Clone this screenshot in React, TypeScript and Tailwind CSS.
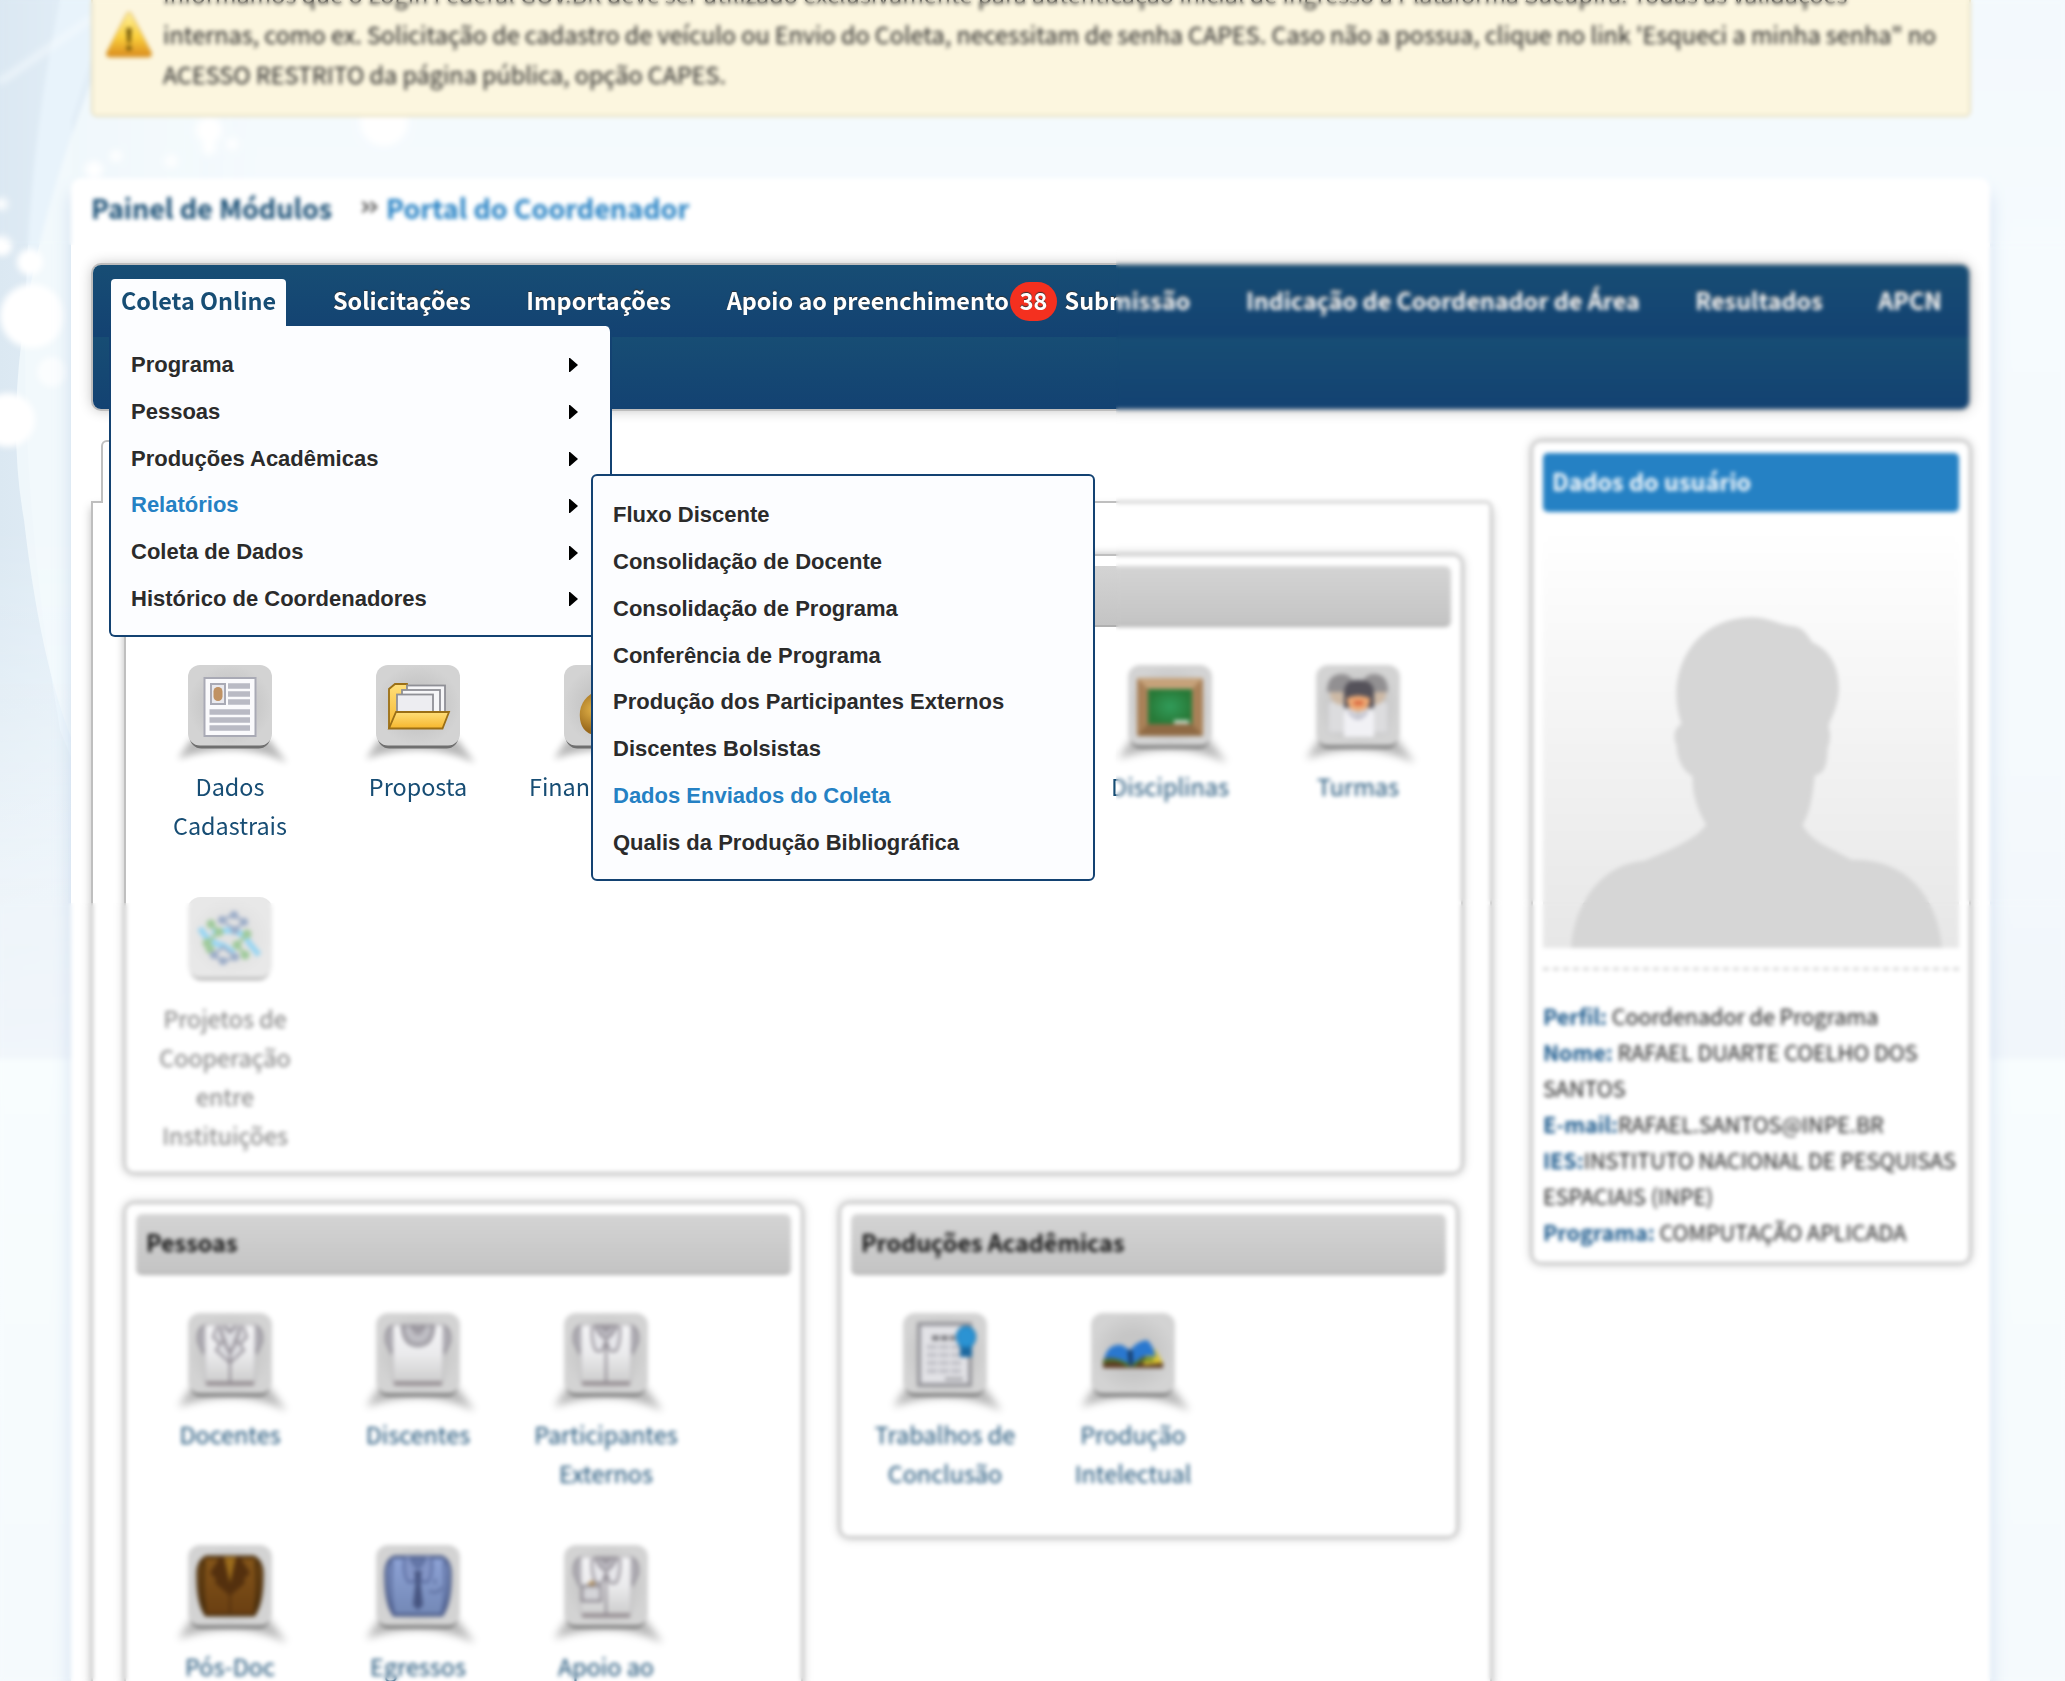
import type { ReactNode } from "react";

const alertLines = [
  "Informamos que o Login Federal GOV.BR deve ser utilizado exclusivamente para autenticação inicial de ingresso à Plataforma Sucupira. Todas as validações",
  "internas, como ex. Solicitação de cadastro de veículo ou Envio do Coleta, necessitam de senha CAPES. Caso não a possua, clique no link 'Esqueci a minha senha\" no",
  "ACESSO RESTRITO da página pública, opção CAPES.",
];

const menuItems = [
  "Programa",
  "Pessoas",
  "Produções Acadêmicas",
  "Relatórios",
  "Coleta de Dados",
  "Histórico de Coordenadores",
];

const submenuItems = [
  "Fluxo Discente",
  "Consolidação de Docente",
  "Consolidação de Programa",
  "Conferência de Programa",
  "Produção dos Participantes Externos",
  "Discentes Bolsistas",
  "Dados Enviados do Coleta",
  "Qualis da Produção Bibliográfica",
];

const userData: [string, string][] = [
  ["Perfil:", " Coordenador de Programa"],
  ["Nome:", " RAFAEL DUARTE COELHO DOS SANTOS"],
  ["E-mail:", "RAFAEL.SANTOS@INPE.BR"],
  ["IES:", "INSTITUTO NACIONAL DE PESQUISAS ESPACIAIS (INPE)"],
  ["Programa:", " COMPUTAÇÃO APLICADA"],
];

function PageBackdrop() {
  return (
    <svg className="absolute inset-0" width="2065" height="1681" viewBox="0 0 2065 1681">
      <defs>
        <linearGradient id="sky" x1="0" y1="0" x2="0" y2="1">
          <stop offset="0" stopColor="#f3f9fd" />
          <stop offset="0.15" stopColor="#f6fbfe" />
          <stop offset="0.45" stopColor="#f5fafd" />
          <stop offset="0.628" stopColor="#f1f6fb" />
          <stop offset="0.632" stopColor="#f8fdfe" />
          <stop offset="1" stopColor="#f5fafd" />
        </linearGradient>
        <linearGradient id="leftSky" x1="0" y1="0" x2="1" y2="0">
          <stop offset="0" stopColor="#dbe8f2" />
          <stop offset="0.4" stopColor="#e4eff8" />
          <stop offset="1" stopColor="#f4fafd" stopOpacity="0" />
        </linearGradient>
        <linearGradient id="fade" x1="0" y1="0" x2="0" y2="1">
          <stop offset="0" stopColor="#fff" />
          <stop offset="0.5" stopColor="#fff" />
          <stop offset="0.85" stopColor="#333" />
          <stop offset="1" stopColor="#000" />
        </linearGradient>
        <mask id="fadeMask">
          <rect width="420" height="1060" fill="url(#fade)" />
        </mask>
        <filter id="soft">
          <feGaussianBlur stdDeviation="3" />
        </filter>
      </defs>
      <rect width="2065" height="1681" fill="url(#sky)" />
      <g mask="url(#fadeMask)">
        <rect width="260" height="1060" fill="url(#leftSky)" />
        <path d="M60 0 Q-10 330 60 730 L72 760 L72 120 Q90 60 110 0Z" fill="#e8f3fb" />
        <path d="M100 60 Q-10 330 24 520 Q40 660 72 740 L200 740 L200 60Z" fill="#f4fafd" opacity="0.8" />
        <path d="M0 82 L92 18" stroke="#f6fbfe" strokeWidth="4" filter="url(#soft)" />
        <g fill="#fff" filter="url(#soft)">
          <circle cx="32" cy="316" r="32" />
          <circle cx="30" cy="262" r="13" />
          <circle cx="52" cy="372" r="15" opacity="0.7" />
          <circle cx="2" cy="246" r="10" />
          <circle cx="2" cy="204" r="6" />
          <circle cx="8" cy="420" r="27" />
          <circle cx="209" cy="130" r="13" />
          <circle cx="209" cy="148" r="7" />
          <circle cx="384" cy="122" r="24" />
          <circle cx="94" cy="170" r="9" />
          <circle cx="171" cy="161" r="6" />
          <circle cx="116" cy="156" r="6" />
          <circle cx="232" cy="144" r="6" />
        </g>
      </g>
    </svg>
  );
}

function WarningIcon() {
  return (
    <svg className="absolute left-[11px] top-[11px]" width="50" height="50" viewBox="0 0 50 50">
      <defs>
        <linearGradient id="warn" x1="0" y1="0" x2="0" y2="1">
          <stop offset="0" stopColor="#fdf0a0" />
          <stop offset="0.55" stopColor="#fbd03c" />
          <stop offset="1" stopColor="#d98a1c" />
        </linearGradient>
      </defs>
      <path d="M25 1 Q27 1 29 6 L47 41 Q49 46 44 46 H6 Q1 46 3 41 L21 6 Q23 1 25 1Z" fill="url(#warn)" stroke="#d9a84a" strokeWidth="1" />
      <path d="M22.5 17 H27.5 L26.5 32 H23.5Z" fill="#6b5208" />
      <circle cx="25" cy="37" r="2.600" fill="#6b5208" />
    </svg>
  );
}

function TileShadow() {
  return (
    <path d="M13 94 Q38 85 66 85 Q96 85 122 98 L104 74 L26 74Z" fill="#000" opacity="0.28" filter="url(#tileBlur)" />
  );
}

function Tile({ children, faded = false }: { children: ReactNode; faded?: boolean }) {
  return (
    <svg className={faded ? "opacity-50" : ""} width="130" height="106" viewBox="0 0 130 106">
      {!faded && <TileShadow />}
      <rect x="24.500" y="10" width="81" height="73.500" rx="12" fill="#6f6f6f" />
      <rect x="23" y="0" width="84" height="80.500" rx="12" fill="url(#tileFace)" />
      <g transform="translate(23 0)">{children}</g>
    </svg>
  );
}

function TileDefs() {
  return (
    <svg className="absolute" width="0" height="0">
      <defs>
        <filter id="tileBlur" x="-20%" y="-20%" width="140%" height="150%">
          <feGaussianBlur stdDeviation="3.500" />
        </filter>
        <radialGradient id="tileFace">
          <stop offset="0.5" stopColor="#c6c6c6" />
          <stop offset="1" stopColor="#d3d3d3" />
        </radialGradient>
        <linearGradient id="shirt" x1="0" y1="0" x2="0" y2="1">
          <stop offset="0" stopColor="#f4f4f6" />
          <stop offset="0.5" stopColor="#ebebed" />
          <stop offset="1" stopColor="#cecece" />
        </linearGradient>
        <linearGradient id="brown" x1="0" y1="0" x2="0" y2="1">
          <stop offset="0" stopColor="#85561a" />
          <stop offset="1" stopColor="#6a3f12" />
        </linearGradient>
        <linearGradient id="blue" x1="0" y1="0" x2="0" y2="1">
          <stop offset="0" stopColor="#8ea3d6" />
          <stop offset="1" stopColor="#7388b6" />
        </linearGradient>
        <linearGradient id="folder" x1="0" y1="0" x2="0" y2="1">
          <stop offset="0" stopColor="#ffdf7a" />
          <stop offset="1" stopColor="#f6b62c" />
        </linearGradient>
        <radialGradient id="bag" cx="0.3" cy="0.4">
          <stop offset="0" stopColor="#e5b54a" />
          <stop offset="1" stopColor="#9a691b" />
        </radialGradient>
        <radialGradient id="board">
          <stop offset="0" stopColor="#319c5a" />
          <stop offset="1" stopColor="#287a38" />
        </radialGradient>
      </defs>
    </svg>
  );
}

function DocIcon() {
  return (
    <g>
      <rect x="16.500" y="13" width="51" height="58" fill="#fafafc" stroke="#a9aab5" strokeWidth="2" />
      <rect x="23" y="19" width="14" height="20" fill="#e9e9ee" stroke="#a9aab5" strokeWidth="2" />
      <rect x="25.500" y="22" width="9" height="14" rx="4.500" fill="#c09263" />
      <path d="M40 21 H62 M40 29 H62 M40 37 H62 M21.500 47 H62 M21.500 55 H62 M21.500 63 H62" stroke="#b9bac4" strokeWidth="5.500" />
    </g>
  );
}

function FolderIcon() {
  return (
    <g strokeWidth="1.800">
      <path d="M13 63 V24 L19 19 H31 L32 25 V63Z" fill="url(#folder)" stroke="#9b6f16" />
      <rect x="31" y="20.500" width="38" height="34" fill="#f6f6f8" stroke="#8f9096" />
      <rect x="26" y="25" width="38" height="32" fill="#f6f6f8" stroke="#8f9096" />
      <rect x="21" y="29.500" width="36" height="30" fill="#ededf1" stroke="#8f9096" />
      <path d="M20 47 H73 L66.500 63.500 H13Z" fill="url(#folder)" stroke="#9b6f16" />
    </g>
  );
}

function MoneyIcon() {
  return (
    <g>
      <path d="M30 27 L27 12 L36 16 L42 11 L50 16 L56 12 L53 27Z" fill="#c98f2b" />
      <path d="M30 27 Q14 36 16 54 Q18 70 36 71 H48 Q66 70 67 54 Q68 36 53 27Z" fill="url(#bag)" />
    </g>
  );
}

function BoardIcon() {
  return (
    <g>
      <rect x="9" y="13" width="66" height="58" rx="2" fill="#a98158" />
      <path d="M9 13 H75 L63 25 H21Z" fill="#c6a27a" />
      <path d="M9 71 H75 L63 58 H21Z" fill="#8f6a44" />
      <rect x="20" y="24" width="44" height="35" fill="url(#board)" />
      <path d="M46 57 H61" stroke="#d5e2d3" strokeWidth="3.500" />
    </g>
  );
}

function ClassIcon() {
  return (
    <g>
      <path d="M12 68 V38 Q27 30 40 44 V68Z M72 68 V38 Q57 30 44 44 V68Z" fill="#dcdcde" stroke="#c5c5c8" />
      <circle cx="26" cy="28" r="12" fill="#cdb9a5" />
      <circle cx="58" cy="28" r="12" fill="#cdb9a5" />
      <path d="M11 27 Q11 9 26 9 Q38 9 40 27Z M44 27 Q46 9 58 9 Q72 9 72 27Z" fill="#929092" />
      <path d="M28 43 V28 Q28 15 42 15 Q58 15 58 28 V43Z" fill="#55525a" />
      <path d="M31 33 Q42 28 54 33 Q54 46 42 46 Q31 46 31 33Z" fill="#eda873" />
      <path d="M38 38 H47" stroke="#d8643c" strokeWidth="4" />
      <path d="M28 72 V48 Q34 42 42 52 Q51 42 58 48 V72Z" fill="#f1f1f5" />
      <path d="M33 46 Q42 60 51 46" fill="none" stroke="#c4c4d0" strokeWidth="4" />
    </g>
  );
}

function NetworkIcon() {
  const green: [number, number][] = [[23, 27], [19, 46], [31, 35], [59, 37], [49, 48], [57, 58], [22, 52]];
  const navy: [number, number][] = [[34, 23], [46, 18], [56, 25], [26, 58], [35, 64], [47, 60], [47, 33]];
  return (
    <g fill="none">
      <path d="M12 31 Q20 46 36 49 L46 56 M24 35 Q54 29 61 46 L71 58" stroke="#3aaee6" strokeWidth="6" />
      <path d="M34 23 L46 18 L56 25 L47 33Z M26 58 L35 50 L47 60 L35 65Z" stroke="#3c5d92" strokeWidth="2.500" />
      <path d="M23 27 L31 35 L19 46 L22 52 M59 37 L49 48 L57 58" stroke="#43963b" strokeWidth="3" />
      {green.map(([x, y]) => <circle key={`${x}-${y}`} cx={x} cy={y} r="4.500" fill="#43963b" />)}
      {navy.map(([x, y]) => <circle key={`${x}-${y}`} cx={x} cy={y} r="4" fill="#3c5d92" />)}
    </g>
  );
}

function Torso({ collar, badge = false }: { collar: "lapel" | "round" | "open"; badge?: boolean }) {
  return (
    <g stroke="#8d8890" strokeWidth="2" fill="none">
      <path d="M18 12 Q8 15 10 29 L15 40 L18 34Z" fill="#adabb2" stroke="#9a979e" />
      <path d="M66 12 Q76 15 74 29 L69 40 L66 34Z" fill="#adabb2" stroke="#9a979e" />
      <rect x="17" y="12" width="50" height="57" fill="url(#shirt)" stroke="#b9b7bb" strokeWidth="1" />
      <path d="M18 70.500 H66" stroke="#938b90" strokeWidth="4" />
      {collar === "round" && (
        <g>
          <path d="M26 13 Q27 33 42 33 Q57 33 58 13Z" fill="#b3b1b8" stroke="#96939a" strokeWidth="2.500" />
          <path d="M32 13 Q33 26 42 26 Q51 26 52 13" stroke="#cfcfd4" />
          <path d="M36 13 L42 19 L48 13" />
        </g>
      )}
      {collar === "open" && (
        <g>
          <path d="M28 13 Q27 30 32 38 L38 38 L42 28 L46 38 L52 38 Q57 30 56 13" fill="#e6e6ea" />
          <path d="M31 13 Q35 22 42 26 Q49 22 53 13Z" fill="#c0bec5" />
          <path d="M37 13 L42 18 L47 13 M42 27 V70" />
        </g>
      )}
      {collar === "lapel" && (
        <g>
          <path d="M29 13 L25 24 L32 31 L28 37 L42 50 L56 37 L52 31 L59 24 L55 13" fill="#dedee2" />
          <path d="M32 13 Q34 26 42 40 Q50 26 52 13 M36 13 L42 19 L48 13" strokeWidth="2.500" />
          <path d="M33 31 L37 26 M51 31 L47 26 M42 40 V70" />
        </g>
      )}
      {badge && (
        <g>
          <rect x="18" y="41" width="19" height="15" fill="#d4d4d8" strokeWidth="2.500" />
          <path d="M23 40 L28 35 L32 40Z" fill="#b08a52" stroke="none" />
        </g>
      )}
    </g>
  );
}

function BrownSuit() {
  return (
    <g>
      <path d="M18 12 H66 Q75 16 74 32 Q74 58 66 70 H18 Q10 58 10 32 Q9 16 18 12Z" fill="url(#brown)" stroke="#4b2f0d" strokeWidth="3" />
      <path d="M16 16 Q13 44 17 66 M68 16 Q71 44 67 66" stroke="#4b2f0d" strokeWidth="3" fill="none" />
      <path d="M32 12 L22 28 L28 34 L27 38 L42 51 L57 38 L56 34 L62 28 L52 12Z" fill="#54300e" />
      <path d="M36 12 L42 38 L48 12Z" fill="#9c6c1c" />
      <path d="M42 50 V68" stroke="#54300e" strokeWidth="2" />
    </g>
  );
}

function BlueShirt() {
  return (
    <g>
      <path d="M18 12 H66 Q75 16 74 32 Q74 58 66 70 H18 Q10 58 10 32 Q9 16 18 12Z" fill="url(#blue)" stroke="#475886" strokeWidth="3" />
      <path d="M16 16 Q13 44 18 68 M68 16 Q71 44 66 68" stroke="#5a6b9b" strokeWidth="2.500" fill="none" />
      <path d="M29 12 Q26 28 32 37 L38 37 L42 28 L46 37 L52 37 Q58 28 55 12" fill="#8395c6" stroke="#56679a" strokeWidth="2" />
      <path d="M34 13 Q38 22 42 24 Q46 22 50 13Z" fill="#6577a8" stroke="#475886" />
      <path d="M38 26 H46 L44 34 L47 60 L42 65 L37 60 L40 34Z" fill="#465480" />
      <path d="M53 46 Q62 50 66 42 M59 34 V39" fill="none" stroke="#5a6b9b" strokeWidth="2" />
    </g>
  );
}

function CertificateIcon() {
  return (
    <g>
      <rect x="16" y="11" width="51" height="61" fill="#e2e2e6" stroke="#98989d" strokeWidth="4" />
      <path d="M29 25 H52" stroke="#77777c" strokeWidth="5" strokeDasharray="7 2" />
      <path d="M24 34 H60 M24 42 H60 M24 50 H60 M24 58 H60" stroke="#bdbdc4" strokeWidth="4" strokeDasharray="10 2" />
      <path d="M42 66 H60" stroke="#b0b0b5" strokeWidth="4" />
      <path d="M57 32 H69 V44 H57Z" fill="#1c689f" />
      <ellipse cx="63" cy="24" rx="9.500" ry="10.500" fill="#2b93d3" stroke="#1c7ab8" strokeWidth="1.500" />
    </g>
  );
}

function BookIcon() {
  return (
    <g>
      <path d="M12 48 L16 42 H66 L72 50 V55 H12Z" fill="#5c3a22" />
      <path d="M56 38 L64 36 L72 50 L52 52Z" fill="#d9c332" />
      <path d="M13 46 Q17 30 31 32 L39 37 Q46 28 56 27 Q62 32 65 44 Q50 40 42 53 L38 53 Q26 42 13 46Z" fill="#2a78cf" />
      <path d="M39 37 L40 52" stroke="#16375f" strokeWidth="4" />
      <path d="M12 49 Q26 44 38 53 M42 53 Q52 44 62 47" stroke="#4c7a2a" strokeWidth="3" fill="none" />
    </g>
  );
}

function Shortcut({ icon, label, wide = false }: { icon: ReactNode; label: string[]; wide?: boolean }) {
  return (
    <div className={`flex h-[232px] w-[188px] shrink-0 flex-col items-center text-[#174d74] ${wide ? "ml-[376px]" : ""}`}>
      <Tile>{icon}</Tile>
      <div className="-mt-[4px] text-center text-[23.4px] leading-[39px] whitespace-nowrap">
        {label.map((l) => (
          <div key={l}>{l}</div>
        ))}
      </div>
    </div>
  );
}

function ModulePanel({ title, className, children }: { title: string; className: string; children: ReactNode }) {
  return (
    <section className={`rounded-[10px] border-2 border-[#bfbfbf] bg-white px-[10px] pt-[10px] shadow-[0_0_9px_rgba(0,0,0,0.28)] ${className}`}>
      <h2 className="h-[61px] rounded-[6px] border-b-2 border-[#b0b0b0] bg-linear-to-b from-[#d4d4d4] to-[#c4c4c4] pl-[10px] text-[23.4px] leading-[56px] font-bold text-[#111]">
        {title}
      </h2>
      <div className="mt-[38px]">{children}</div>
    </section>
  );
}

function Silhouette() {
  return (
    <svg className="mt-[18px] block" width="416" height="418" viewBox="118 -20 1157 862" preserveAspectRatio="none">
      <defs>
        <linearGradient id="photo" x1="0" y1="0" x2="0" y2="1">
          <stop offset="0" stopColor="#ffffff" />
          <stop offset="1" stopColor="#e7e7e7" />
        </linearGradient>
      </defs>
      <rect x="118" y="-20" width="1157" height="862" fill="url(#photo)" />
      <path
        d="M196 842 C205 745 285 668 400 662 C470 640 540 620 572 588 C545 555 532 520 534 488 C500 475 488 440 490 425 C480 410 480 390 503 380 C455 280 530 160 700 160 C745 160 775 176 812 178 C845 180 855 200 868 212 C930 232 945 280 940 320 C935 350 918 370 912 385 C920 400 916 420 910 428 C908 470 900 482 874 486 C868 530 860 565 840 588 C865 625 920 635 975 660 C1120 655 1215 730 1228 842Z"
        fill="#d6d6d6"
      />
    </svg>
  );
}

export default function App() {
  return (
    <div className="relative h-[1681px] w-[2065px] overflow-hidden bg-[#f5fafd] font-['Noto_Sans_CJK_JP','Noto_Sans',sans-serif]">
      <PageBackdrop />
      <TileDefs />

      <div className="relative z-0 flex flex-col">
        <div className="relative ml-[91px] h-[117px] w-[1880px] rounded-b-[6px] border-2 border-t-0 border-[#e6dfc0] bg-[#fcf6df] text-[#222]">
          <WarningIcon />
          <div className="-mt-[25px] pl-[70px] text-[23.4px] leading-[39.8px] whitespace-nowrap">
            {alertLines.map((l) => (
              <p key={l}>{l}</p>
            ))}
          </div>
        </div>

        <main className="mt-[61px] ml-[71px] h-[1600px] w-[1919px] rounded-t-[10px] bg-white pt-[10px] pl-[20px] shadow-[0_14px_18px_rgba(150,180,220,0.4)]">
          <div className="flex h-[40px] items-center text-[27px] leading-[40px] font-bold whitespace-nowrap">
            <span className="text-[#174d74]">Painel de Módulos</span>
            <svg className="mt-[-3px] ml-[29px]" width="18" height="14" viewBox="0 0 18 14">
              <path d="M1.500 2 L7 7 L1.500 12 M9.500 2 L15 7 L9.500 12" fill="none" stroke="#333" strokeWidth="2.200" />
            </svg>
            <span className="ml-[7px] text-[#2581c4]">Portal do Coordenador</span>
          </div>

          <nav className="mt-[37px] ml-[2px] flex h-[144px] w-[1876px] items-start rounded-[8px] bg-[linear-gradient(#174d74,#134272)] bg-size-[100%_72px] shadow-[0_0_0_2px_#bdbdbd,0_0_14px_rgba(0,0,0,0.3)]">
            <div className="mt-[14px] ml-[18px] h-[49px] w-[175px] rounded-t-[4px] bg-[#fcfdff] text-center text-[23.4px] leading-[43px] font-bold whitespace-nowrap text-[#174d74]">
              Coleta Online
            </div>
            <div className="ml-[47px] flex gap-[55.6px] pt-[14px] text-[23.4px] leading-[42px] font-bold whitespace-nowrap text-white [text-shadow:0_-1px_1px_#333]">
              <span>Solicitações</span>
              <span>Importações</span>
              <span className="relative">
                Apoio ao preenchimento
                <span className="absolute top-[3px] -right-[48px] h-[39px] w-[47px] rounded-full bg-[#f4301f] text-center leading-[37px]">38</span>
              </span>
              <span>Submissão</span>
              <span>Indicação de Coordenador de Área</span>
              <span>Resultados</span>
              <span>APCN</span>
            </div>
          </nav>

          <div className="mt-[31px] flex items-start">
            <div className="w-[1401px]">
              <div className="relative -mb-[2px] ml-[10px] h-[63px] w-[280px] rounded-t-[6px] border-2 border-b-0 border-[#bfbfbf] bg-white" />
              <div className="h-[1300px] rounded-tr-[6px] border-2 border-[#bfbfbf] bg-white pt-[51px] pl-[31px] shadow-[0_6px_10px_rgba(0,0,0,0.26)]">
                <ModulePanel title="Programa" className="h-[620px] w-[1339px]">
                  <div className="flex">
                    <Shortcut icon={<DocIcon />} label={["Dados", "Cadastrais"]} />
                    <Shortcut icon={<FolderIcon />} label={["Proposta"]} />
                    <Shortcut icon={<MoneyIcon />} label={["Financiadores"]} />
                    <Shortcut icon={<BoardIcon />} label={["Disciplinas"]} wide />
                    <Shortcut icon={<ClassIcon />} label={["Turmas"]} />
                  </div>
                  <div className="flex w-[188px] flex-col items-center">
                    <Tile faded>
                      <NetworkIcon />
                    </Tile>
                    <div className="-mt-[4px] mr-[10px] text-center text-[23.4px] leading-[39px] text-[#222] opacity-60">
                      Projetos de
                      <br />
                      Cooperação
                      <br />
                      entre
                      <br />
                      Instituições
                    </div>
                  </div>
                </ModulePanel>

                <div className="mt-[28px] flex items-start gap-[36px]">
                  <ModulePanel title="Pessoas" className="h-[640px] w-[679px]">
                    <div className="flex flex-wrap">
                      <Shortcut icon={<Torso collar="lapel" />} label={["Docentes"]} />
                      <Shortcut icon={<Torso collar="round" />} label={["Discentes"]} />
                      <Shortcut icon={<Torso collar="open" />} label={["Participantes", "Externos"]} />
                      <Shortcut icon={<BrownSuit />} label={["Pós-Doc"]} />
                      <Shortcut icon={<BlueShirt />} label={["Egressos"]} />
                      <Shortcut icon={<Torso collar="open" badge />} label={["Apoio ao"]} />
                    </div>
                  </ModulePanel>
                  <ModulePanel title="Produções Acadêmicas" className="h-[336px] w-[619px]">
                    <div className="flex">
                      <Shortcut icon={<CertificateIcon />} label={["Trabalhos de", "Conclusão"]} />
                      <Shortcut icon={<BookIcon />} label={["Produção", "Intelectual"]} />
                    </div>
                  </ModulePanel>
                </div>
              </div>
            </div>

            <aside className="ml-[39px] h-[824px] w-[440px] rounded-[10px] border-2 border-[#bfbfbf] bg-white px-[10px] pt-[11px] shadow-[0_0_9px_rgba(0,0,0,0.28)]">
              <h2 className="h-[59px] rounded-[5px] bg-[#2581c4] pl-[9px] text-[23.4px] leading-[56px] font-bold text-white">Dados do usuário</h2>
              <Silhouette />
              <div className="mt-[20px] h-[2px] bg-[repeating-linear-gradient(90deg,#c4c4c4_0_6px,transparent_6px_10px)]" />
              <div className="mt-[28px] text-[21.6px] leading-[36px] tracking-[-0.05px] text-[#181818]">
                {userData.map(([k, v]) => (
                  <p key={k}>
                    <b className="text-[#17568a]">{k}</b>
                    {v}
                  </p>
                ))}
              </div>
            </aside>
          </div>
        </main>
      </div>

      <div className="pointer-events-none absolute top-0 left-0 h-[245px] w-[2065px] backdrop-blur-[2.1px]" />
      <div className="pointer-events-none absolute top-[245px] left-[1116px] h-[658px] w-[949px] backdrop-blur-[2.1px]" />
      <div className="pointer-events-none absolute top-[903px] left-0 h-[778px] w-[2065px] backdrop-blur-[2.1px]" />

      <ul className="absolute top-[326px] left-[109px] z-10 h-[311px] w-[503px] rounded-[6px] rounded-tl-none border-2 border-t-0 border-[#134272] bg-[#fcfdff] pt-[16px] pr-[32px] pl-[20px] font-['Liberation_Sans',sans-serif] text-[22px] leading-[46.8px] font-bold text-[#2b2b2b]">
        {menuItems.map((m) => (
          <li key={m} className={`flex items-center justify-between ${m === "Relatórios" ? "text-[#2581c4]" : ""}`}>
            {m}
            <svg width="9" height="14" viewBox="0 0 9 14">
              <path d="M0 0 H1 L9 7 L1 14 H0Z" fill="#000" />
            </svg>
          </li>
        ))}
      </ul>

      <ul className="absolute top-[474px] left-[591px] z-10 h-[407px] w-[504px] rounded-[6px] border-2 border-[#134272] bg-[#fcfdff] pt-[16px] pl-[20px] font-['Liberation_Sans',sans-serif] text-[22px] leading-[46.85px] font-bold text-[#2b2b2b]">
        {submenuItems.map((m) => (
          <li key={m} className={m === "Dados Enviados do Coleta" ? "text-[#2581c4]" : ""}>
            {m}
          </li>
        ))}
      </ul>
    </div>
  );
}
